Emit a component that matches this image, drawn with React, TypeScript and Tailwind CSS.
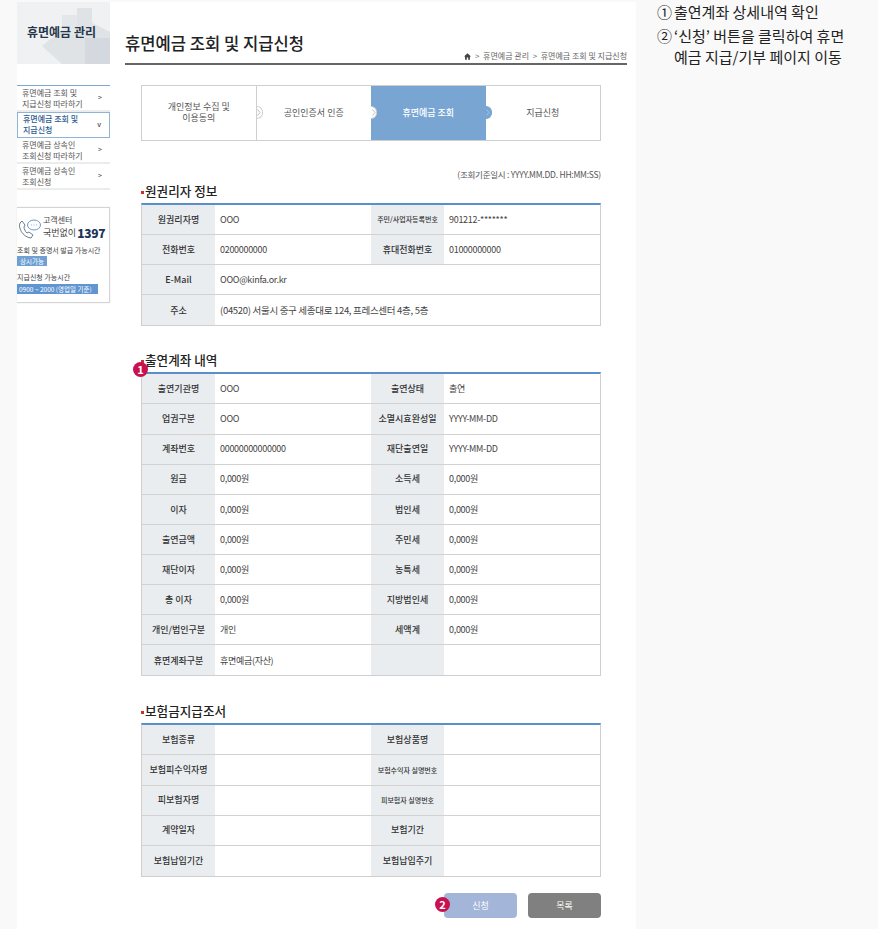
const FONT = "font-['Noto_Sans_CJK_KR','Noto_Sans',sans-serif]";

type Cell = { label: string; value?: string; small?: boolean };

const ownerRows: Cell[][] = [
  [{ label: "원권리자명", value: "OOO" }, { label: "주민/사업자등록번호", value: "901212-*******", small: true }],
  [{ label: "전화번호", value: "0200000000" }, { label: "휴대전화번호", value: "01000000000" }],
];

const accountRows: Cell[][] = [
  [{ label: "출연기관명", value: "OOO" }, { label: "출연상태", value: "출연" }],
  [{ label: "업권구분", value: "OOO" }, { label: "소멸시효완성일", value: "YYYY-MM-DD" }],
  [{ label: "계좌번호", value: "00000000000000" }, { label: "재단출연일", value: "YYYY-MM-DD" }],
  [{ label: "원금", value: "0,000원" }, { label: "소득세", value: "0,000원" }],
  [{ label: "이자", value: "0,000원" }, { label: "법인세", value: "0,000원" }],
  [{ label: "출연금액", value: "0,000원" }, { label: "주민세", value: "0,000원" }],
  [{ label: "재단이자", value: "0,000원" }, { label: "농특세", value: "0,000원" }],
  [{ label: "총 이자", value: "0,000원" }, { label: "지방법인세", value: "0,000원" }],
  [{ label: "개인/법인구분", value: "개인" }, { label: "세액계", value: "0,000원" }],
  [{ label: "휴면계좌구분", value: "휴면예금(자산)" }, { label: "", value: "" }],
];

const insuranceRows: Cell[][] = [
  [{ label: "보험종류" }, { label: "보험상품명" }],
  [{ label: "보험피수익자명" }, { label: "보험수익자 실명번호", small: true }],
  [{ label: "피보험자명" }, { label: "피보험자 실명번호", small: true }],
  [{ label: "계약일자" }, { label: "보험기간" }],
  [{ label: "보험납입기간" }, { label: "보험납입주기" }],
];

const menu = [
  { lines: ["휴면예금 조회 및", "지급신청 따라하기"], mark: ">" },
  { lines: ["휴면예금 조회 및", "지급신청"], mark: "v", active: true },
  { lines: ["휴면예금 상속인", "조회신청 따라하기"], mark: ">" },
  { lines: ["휴면예금 상속인", "조회신청"], mark: ">" },
];

const steps = [
  { lines: ["개인정보 수집 및", "이용동의"] },
  { lines: ["공인인증서 인증"] },
  { lines: ["휴면예금 조회"], active: true },
  { lines: ["지급신청"] },
];

function Label({ text, small }: { text: string; small?: boolean }) {
  return (
    <div className={`bg-[#e9edf0] flex items-center justify-center font-medium text-[#333] whitespace-nowrap ${small ? "text-[7px]" : "text-[9px]"}`}>
      {text}
    </div>
  );
}

function Row({ cells }: { cells: Cell[] }) {
  return (
    <div className="grid grid-cols-[73px_156px_73px_1fr] border-b border-[#d2d2d2] last:border-b-0 h-[30.1px]">
      {cells.map((c, i) => (
        <div key={i} className="contents">
          <Label text={c.label} small={c.small} />
          <div className="flex items-center px-[5px] text-[9px] tracking-[-0.3px] text-[#444]">{c.value}</div>
        </div>
      ))}
    </div>
  );
}

function Section({ title, children }: { title: string; children: React.ReactNode }) {
  return (
    <section>
      <h3 className="flex items-center h-[18px] text-[12.6px] font-medium text-[#222]">
        <span className="w-[3px] h-[3px] bg-[#c8322d] mr-[1px] mt-[3px]" />
        {title}
      </h3>
      <div className="mt-[3px] border border-[#cfcfcf] border-t-2 border-t-[#5b8fc9]">{children}</div>
    </section>
  );
}

function Badge({ n }: { n: string }) {
  return (
    <span className="w-[15px] h-[15px] rounded-full bg-[#c8114f] text-white text-[11px] font-bold leading-none flex items-center justify-center">
      {n}
    </span>
  );
}

function Sidebar() {
  return (
    <aside className="w-[93px] shrink-0">
      <div className="relative h-[62px] bg-[#f0f1f2] overflow-hidden">
        <svg className="absolute inset-0" width="93" height="62" viewBox="0 0 93 62">
          <path d="M45 62 L25 44 L62 14 L93 30 V62 Z" fill="#dfe3e6" />
          <rect x="45" y="13" width="16" height="20" fill="#e4e7e9" />
          <rect x="60" y="6" width="15" height="56" fill="#e0e3e6" />
          <rect x="68" y="36" width="25" height="26" fill="#d3d9de" />
        </svg>
        <p className="relative pt-[21px] pl-[10px] text-[12px] font-bold text-[#28384a] whitespace-nowrap">휴면예금 관리</p>
      </div>
      <ul className="mt-[21px] border-t border-t-[#7fa9d6]">
        {menu.map((m) => (
          <li
            key={m.lines[0] + m.lines[1]}
            className={`h-[26px] flex items-center justify-between pl-[5px] pr-[8px] text-[8px] leading-[11px] ${
              m.active ? "border border-[#8fb4da] pb-[2px] text-[#2d5b8f] font-medium" : "border-b-2 border-b-[#ececec] pb-[1px] text-[#555]"
            }`}
          >
            <span className="whitespace-nowrap">
              {m.lines[0]}
              <br />
              {m.lines[1]}
            </span>
            <span className="text-[7px] text-[#444]">{m.mark}</span>
          </li>
        ))}
      </ul>
      <div className="mt-[17px] h-[96px] border border-[#d4d4d4] border-l-0 shadow-[0_0_1px_#ddd]">
        <div className="flex items-start pt-[7px]">
          <svg className="mt-[3px] ml-[1px] shrink-0" width="24" height="22" viewBox="0 0 24 22" fill="none" stroke="#4a5a6a" strokeWidth="0.8">
            <path d="M2 5 C0 9 4 19 13 20 L15 17 L11 14 L9 15 C7 13 6 11 6 9 L7 7 L4 3 Z" />
            <ellipse cx="16" cy="7" rx="6.5" ry="5" stroke="#4a7fb8" />
            <path d="M13 7h.6M15.7 7h.6M18.4 7h.6" stroke="#4a7fb8" strokeWidth="1.2" />
          </svg>
          <div className="ml-[1px]">
            <p className="text-[8px] leading-[10px] text-[#444] whitespace-nowrap">고객센터</p>
            <p className="flex items-center text-[9px] leading-[15px] text-[#444] whitespace-nowrap">
              국번없이<span className="ml-[1px] text-[12px] font-black text-[#1b3558] tracking-[-0.3px]">1397</span>
            </p>
          </div>
        </div>
        <p className="mt-[6px] text-[7px] leading-[9px] text-[#444] whitespace-nowrap">조회 및 증명서 발급 가능시간</p>
        <p className="mt-[1px] w-[30px] h-[10px] bg-[#6f9fd3] text-[6.5px] leading-[10px] text-white pl-[3px] whitespace-nowrap">상시가능</p>
        <p className="mt-[7px] text-[7px] leading-[9px] text-[#444] whitespace-nowrap">지급신청 가능시간</p>
        <p className="mt-[2px] w-[81px] h-[10px] bg-[#5f95d0] text-[6.5px] leading-[10px] text-white pl-[2px] whitespace-nowrap">0900 ~ 2000 (영업일 기준)</p>
      </div>
    </aside>
  );
}

function Steps() {
  return (
    <div className="ml-[16px] w-[460px] h-[56px] grid grid-cols-4 border border-[#cfcfcf]">
      {steps.map((s, i) => (
        <div
          key={s.lines[0]}
          className={`relative flex items-center justify-center pb-[2px] text-center text-[9px] leading-[11px] ${
            s.active ? "bg-[#79a5d3] text-white font-medium" : "text-[#555]"
          } ${i === 0 ? "border-r border-[#cfcfcf]" : ""}`}
        >
          <span>
            {s.lines.map((l) => (
              <span key={l} className="block whitespace-nowrap">{l}</span>
            ))}
          </span>
          {i > 0 && (
            <span
              className={`absolute left-0 top-[20px] w-[6px] h-[13px] rounded-r-full border border-l-0 flex items-center justify-center ${
                i === 3 ? "bg-[#79a5d3] border-[#79a5d3]" : "bg-white border-[#cfcfcf]"
              }`}
            >
              <svg width="4" height="7" viewBox="0 0 4 7" fill="none" stroke={i === 3 ? "#a9c6e4" : "#aaaaaa"} strokeWidth="0.8">
                <path d="M0.5 0.5 L3 3.5 L0.5 6.5" />
              </svg>
            </span>
          )}
        </div>
      ))}
    </div>
  );
}

export default function App() {
  return (
    <div className={`${FONT} min-h-[929px] h-[929px] overflow-hidden bg-[#f9f9f9] pt-[2px] flex`}>
      <div className="ml-[17px] w-[619px] shrink-0 bg-white flex">
        <Sidebar />
        <main className="ml-[15px] w-[502px]">
          <div className="h-[63px] border-b-2 border-b-[#666] flex items-end justify-between pb-[1px]">
            <h1 className="text-[16.6px] leading-[25px] mb-[6px] font-medium text-[#222] whitespace-nowrap">휴면예금 조회 및 지급신청</h1>
            <p className="flex items-center gap-[4px] text-[8px] leading-[12px] text-[#666] whitespace-nowrap">
              <svg width="7" height="7" viewBox="0 0 10 10" fill="#444">
                <path d="M5 0.5 L10 5 H8.5 V9.5 H6 V6.5 H4 V9.5 H1.5 V5 H0 Z" />
              </svg>
              &gt;&nbsp; 휴면예금 관리 &nbsp;&gt;&nbsp; 휴면예금 조회 및 지급신청
            </p>
          </div>
          <div className="mt-[20px]">
            <Steps />
          </div>
          <p className="ml-[16px] w-[460px] mt-[27px] text-right text-[8.5px] tracking-[-0.25px] leading-[12px] text-[#555] whitespace-nowrap">
            (조회기준일시 : YYYY.MM.DD. HH:MM:SS)
          </p>
          <div className="ml-[16px] w-[460px] mt-[2px] flex flex-col">
            <Section title="원권리자 정보">
              {ownerRows.map((r) => (
                <Row key={r[0].label} cells={r} />
              ))}
              <div className="grid grid-cols-[73px_1fr] h-[30.1px] border-b border-[#d2d2d2]">
                <Label text="E-Mail" />
                <div className="flex items-center px-[5px] text-[9px] tracking-[-0.3px] text-[#444]">OOO@kinfa.or.kr</div>
              </div>
              <div className="grid grid-cols-[73px_1fr] h-[30.1px]">
                <Label text="주소" />
                <div className="flex items-center px-[5px] text-[9.5px] tracking-[-0.3px] text-[#444]">(04520) 서울시 중구 세종대로 124, 프레스센터 4층, 5층</div>
              </div>
            </Section>
            <div className="relative mt-[25px]">
              <span className="absolute -left-[8px] top-[11px] z-10">
                <Badge n="1" />
              </span>
              <Section title="출연계좌 내역">
                {accountRows.map((r) => (
                  <Row key={r[0].label} cells={r} />
                ))}
              </Section>
            </div>
            <div className="mt-[26px]">
              <Section title="보험금지급조서">
                {insuranceRows.map((r) => (
                  <Row key={r[0].label} cells={r} />
                ))}
              </Section>
            </div>
            <div className="mt-[16px] flex items-center justify-end gap-[11px]">
              <span className="-mr-[3px] mb-[2px] z-10">
                <Badge n="2" />
              </span>
              <button className="-ml-[14px] w-[73px] h-[25px] rounded-[4px] bg-[#a3b5d8] text-[9px] text-white">신청</button>
              <button className="w-[73px] h-[25px] rounded-[4px] bg-[#808080] text-[9px] text-white">목록</button>
            </div>
          </div>
        </main>
      </div>
      <div className="ml-[21px] -mt-[1px] text-[15px] leading-[21px] text-[#222] whitespace-nowrap">
        <p className="flex">
          <span className="w-[17px]">①</span>
          <span>출연계좌 상세내역 확인</span>
        </p>
        <div className="mt-[3px] flex">
          <span className="w-[17px]">②</span>
          <p>
            ‘신청’ 버튼을 클릭하여 휴면
            <br />
            예금 지급/기부 페이지 이동
          </p>
        </div>
      </div>
    </div>
  );
}
